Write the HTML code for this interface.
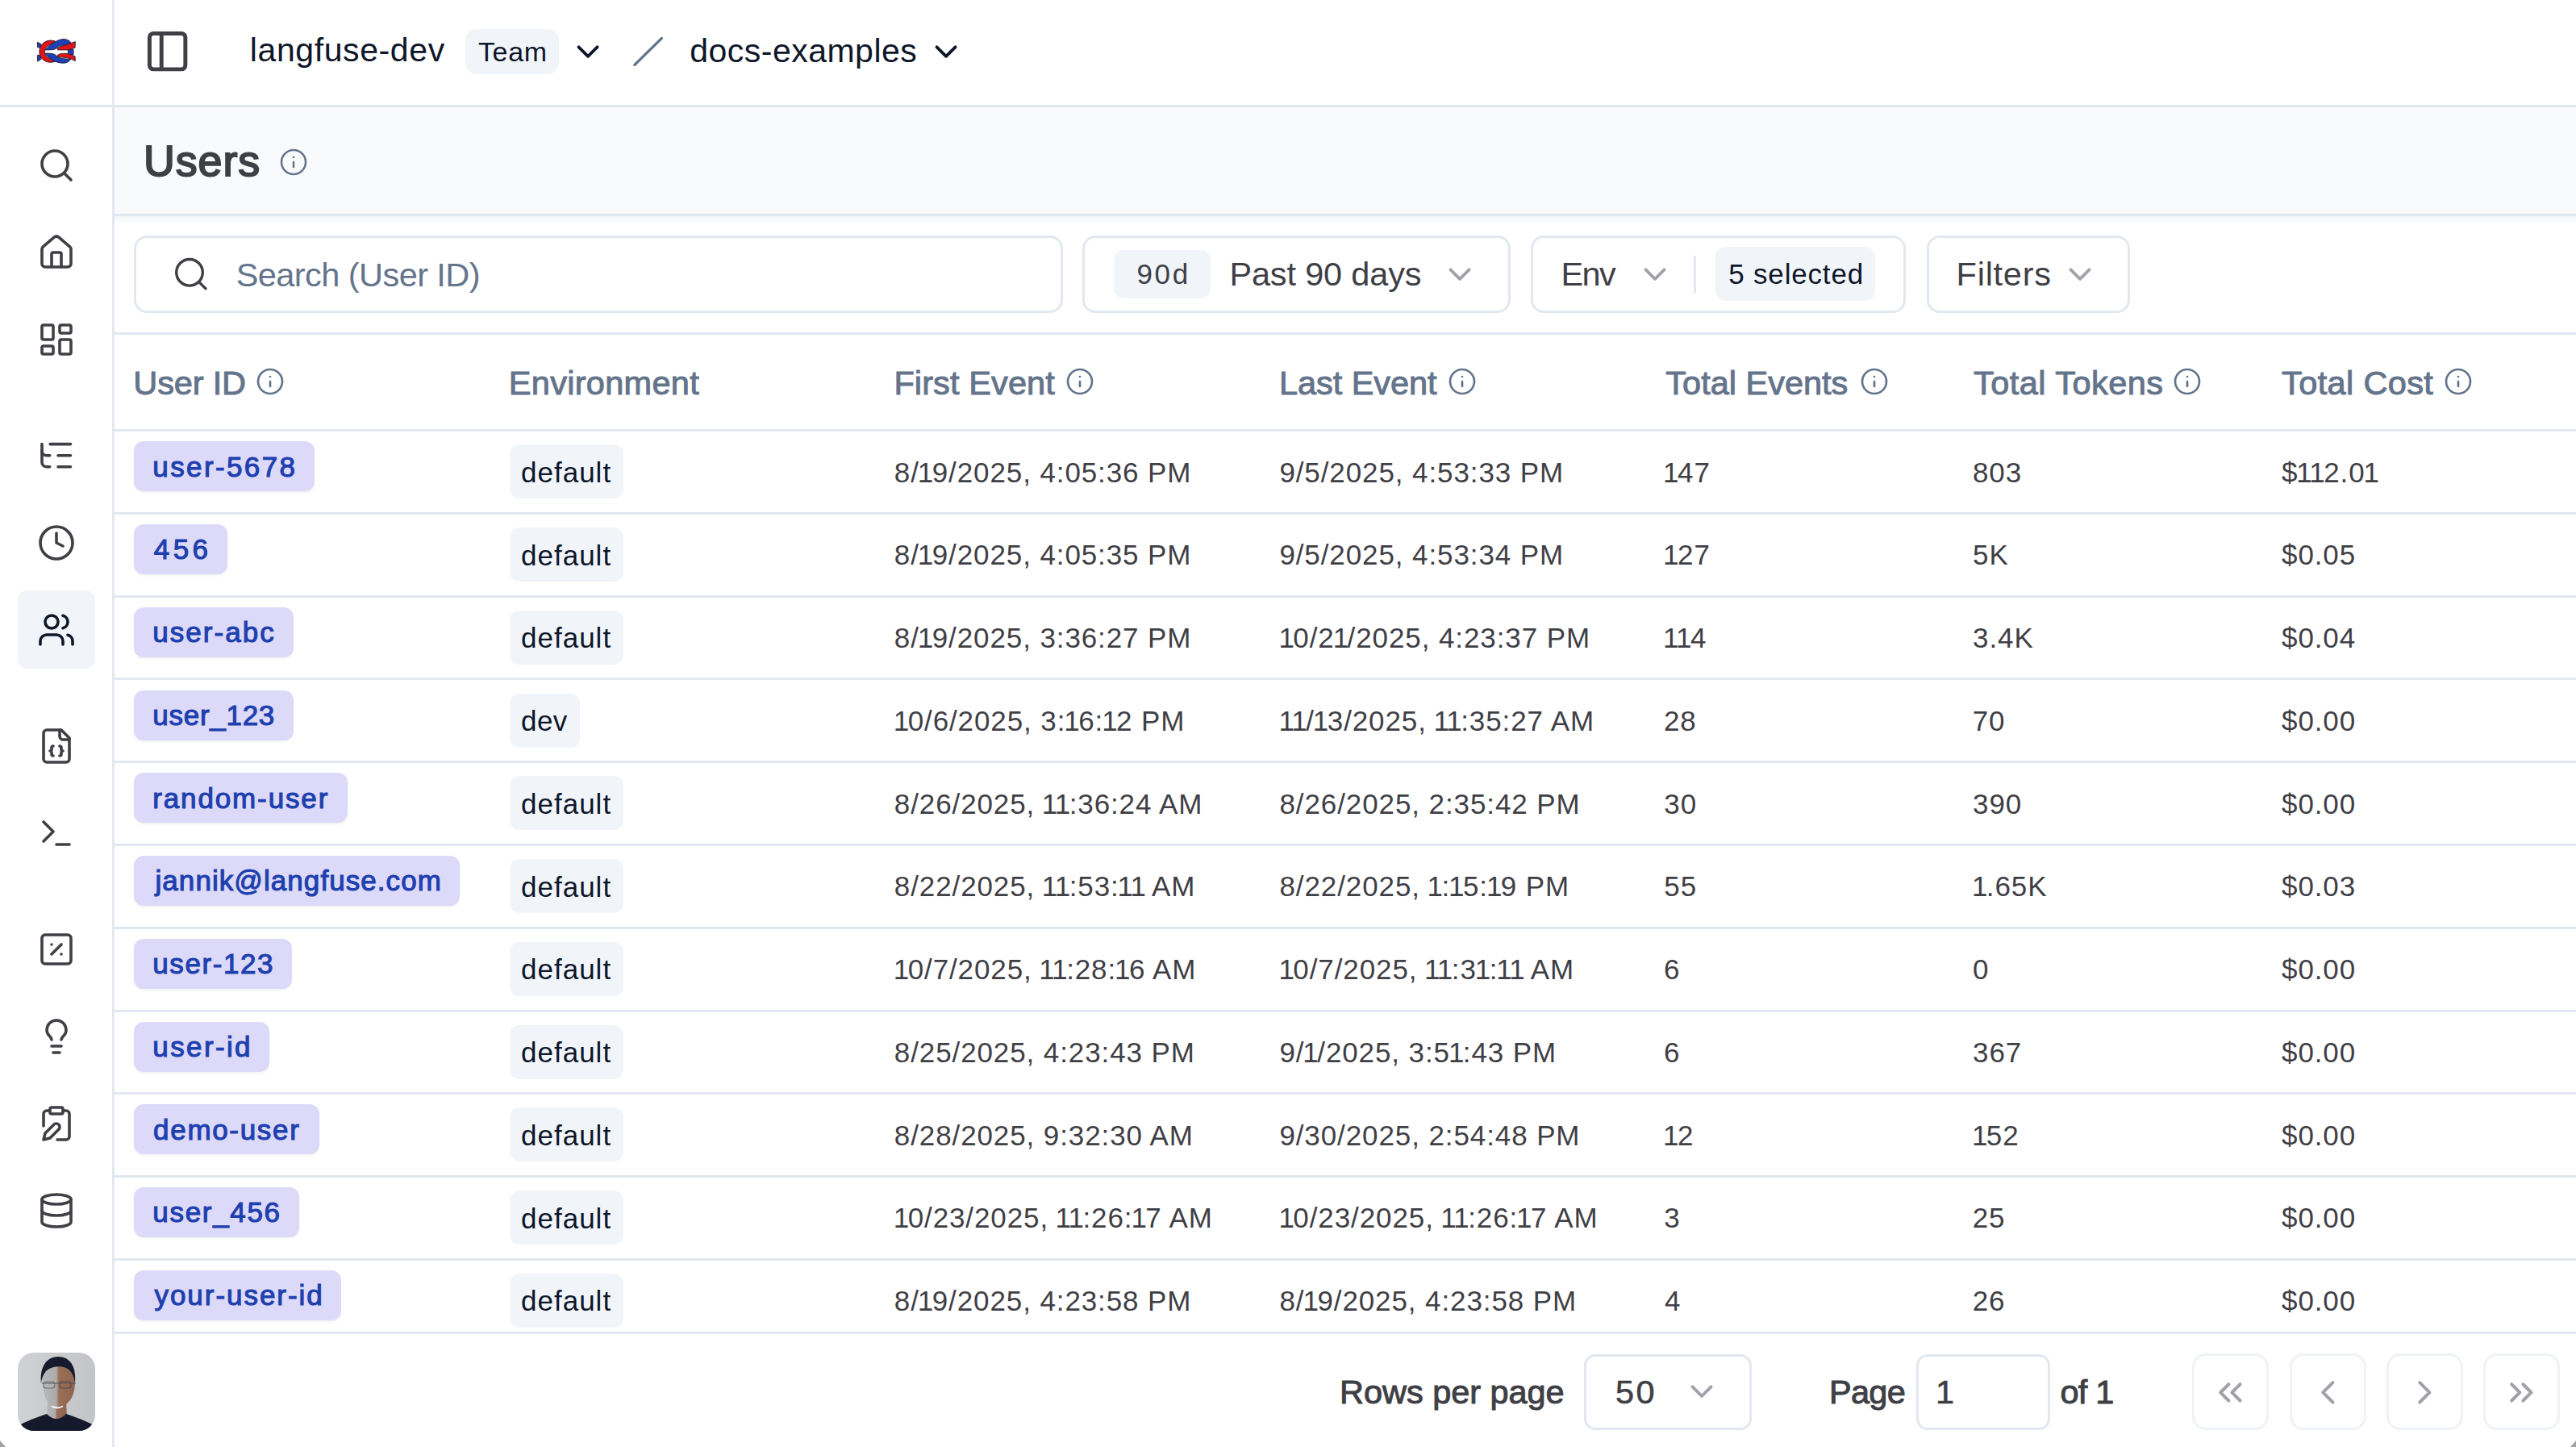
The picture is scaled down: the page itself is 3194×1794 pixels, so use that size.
<!DOCTYPE html>
<html><head><meta charset="utf-8"><style>
html,body{margin:0;padding:0;}
body{width:3194px;height:1794px;position:relative;overflow:hidden;background:#fff;font-family:"Liberation Sans",sans-serif;}
.t{position:absolute;white-space:pre;}
.b{position:absolute;}
.i{position:absolute;overflow:visible;}
@media (max-width:2400px){html{zoom:0.5;}}
</style></head><body>
<div class="b" style="left:0.00px;top:0.00px;width:3194.00px;height:130.00px;background:#fff"></div>
<div class="b" style="left:0.00px;top:130.00px;width:3194.00px;height:3.00px;background:#e2e8f0"></div>
<div class="b" style="left:139.00px;top:0.00px;width:3.00px;height:1794.00px;background:#e2e8f0"></div>
<div class="b" style="left:142.00px;top:133.00px;width:3052.00px;height:132.00px;background:#f8fafc"></div>
<div class="b" style="left:142.00px;top:265.00px;width:3052.00px;height:3.00px;background:#e2e8f0"></div>
<div class="b" style="left:142.00px;top:268.00px;width:3052.00px;height:10.00px;background:linear-gradient(#f3f5f8,#fff)"></div>
<div class="b" style="left:142.00px;top:412.00px;width:3052.00px;height:3.00px;background:#e2e8f0"></div>
<div class="b" style="left:142.00px;top:532.00px;width:3052.00px;height:3.00px;background:#e2e8f0"></div>
<div class="b" style="left:142.00px;top:635.00px;width:3052.00px;height:3.00px;background:#e2e8f0"></div>
<div class="b" style="left:142.00px;top:738.00px;width:3052.00px;height:3.00px;background:#e2e8f0"></div>
<div class="b" style="left:142.00px;top:840.00px;width:3052.00px;height:3.00px;background:#e2e8f0"></div>
<div class="b" style="left:142.00px;top:943.00px;width:3052.00px;height:3.00px;background:#e2e8f0"></div>
<div class="b" style="left:142.00px;top:1046.00px;width:3052.00px;height:3.00px;background:#e2e8f0"></div>
<div class="b" style="left:142.00px;top:1149.00px;width:3052.00px;height:3.00px;background:#e2e8f0"></div>
<div class="b" style="left:142.00px;top:1252.00px;width:3052.00px;height:3.00px;background:#e2e8f0"></div>
<div class="b" style="left:142.00px;top:1354.00px;width:3052.00px;height:3.00px;background:#e2e8f0"></div>
<div class="b" style="left:142.00px;top:1457.00px;width:3052.00px;height:3.00px;background:#e2e8f0"></div>
<div class="b" style="left:142.00px;top:1560.00px;width:3052.00px;height:3.00px;background:#e2e8f0"></div>
<div class="b" style="left:142.00px;top:1651.00px;width:3052.00px;height:3.00px;background:#e2e8f0"></div>
<svg class="i" style="left:40px;top:40px;width:60px;height:48px" viewBox="0 0 1809 1447">
<g stroke="#1f1f2a" stroke-width="26" stroke-linejoin="round">
<path fill="#1d3fb8" d="M195 370 L330 440 L300 580 L195 560 Z"/>
<path fill="#1d3fb8" d="M195 860 L300 850 L330 1010 L195 1090 Z"/>
<path fill="#1d3fb8" d="M1340 640 L1540 640 L1540 830 L1340 830 Z"/>
<path fill="#e0141a" d="M850 330 C560 230 270 420 265 720 C270 1030 560 1200 880 1090 L800 960 C600 1010 470 900 465 730 C470 560 600 470 830 400 Z"/>
<path fill="#1d3fb8" d="M480 660 C620 500 800 340 1100 260 C1300 240 1420 320 1460 420 L1300 500 C1150 470 1000 480 900 600 C820 660 700 660 480 660 Z"/>
<path fill="#e0141a" d="M930 600 C1050 500 1300 480 1450 410 L1610 350 L1600 580 L1350 660 L960 660 Z"/>
<path fill="#1d3fb8" d="M480 790 C700 780 820 790 900 880 C1000 980 1200 1000 1440 1000 C1380 1120 1250 1160 1100 1150 C820 1120 650 1000 480 790 Z"/>
<path fill="#e0141a" d="M930 870 C1000 790 1200 780 1350 800 L1600 900 L1610 1070 L1450 1000 C1300 940 1100 930 960 930 Z"/>
</g></svg>
<svg class="i" style="left:178.40px;top:34.20px;width:59.28px;height:59.28px;" viewBox="0 0 24 24" fill="none" stroke="#3f3f46" stroke-width="2.0" stroke-linecap="round" stroke-linejoin="round"><rect width="18" height="18" x="3" y="3" rx="2"/><path d="M9 3v18"/></svg>
<div class="t" style="left:309.85px;top:42.29px;font-size:41px;line-height:41px;color:#0f172a;letter-spacing:0.593px;">langfuse-dev</div>
<div class="b" style="left:577.00px;top:35.80px;width:116.00px;height:55.90px;background:#f1f5f9;border-radius:14px"></div>
<div class="t" style="left:592.95px;top:47.11px;font-size:34px;line-height:34px;color:#0f172a;letter-spacing:0.683px;">Team</div>
<svg class="i" style="left:705.76px;top:40.81px;width:46.08px;height:46.08px;" viewBox="0 0 24 24" fill="none" stroke="#0f172a" stroke-width="2" stroke-linecap="round" stroke-linejoin="round"><path d="m6 9 6 6 6-6"/></svg>
<svg class="i" style="left:770px;top:30px;width:70px;height:70px" viewBox="770 30 70 70"><line x1="786.8" y1="80.5" x2="820.5" y2="47.4" stroke="#64748b" stroke-width="3.2" stroke-linecap="round"/></svg>
<div class="t" style="left:855.25px;top:42.89px;font-size:41px;line-height:41px;color:#0f172a;letter-spacing:0.483px;">docs-examples</div>
<svg class="i" style="left:1149.96px;top:40.86px;width:46.08px;height:46.08px;" viewBox="0 0 24 24" fill="none" stroke="#0f172a" stroke-width="2" stroke-linecap="round" stroke-linejoin="round"><path d="m6 9 6 6 6-6"/></svg>
<div class="b" style="left:21.80px;top:732.40px;width:96.40px;height:96.40px;background:#f1f5f9;border-radius:12px"></div>
<svg class="i" style="left:46.00px;top:181.00px;width:48.00px;height:48.00px;" viewBox="0 0 24 24" fill="none" stroke="#3f3f46" stroke-width="1.8" stroke-linecap="round" stroke-linejoin="round"><circle cx="11" cy="11" r="8"/><path d="m21 21-4.3-4.3"/></svg>
<svg class="i" style="left:46.00px;top:288.50px;width:48.00px;height:48.00px;" viewBox="0 0 24 24" fill="none" stroke="#3f3f46" stroke-width="1.8" stroke-linecap="round" stroke-linejoin="round"><path d="M15 21v-8a1 1 0 0 0-1-1h-4a1 1 0 0 0-1 1v8"/><path d="M3 10a2 2 0 0 1 .709-1.528l7-5.999a2 2 0 0 1 2.582 0l7 5.999A2 2 0 0 1 21 10v9a2 2 0 0 1-2 2H5a2 2 0 0 1-2-2z"/></svg>
<svg class="i" style="left:46.00px;top:396.50px;width:48.00px;height:48.00px;" viewBox="0 0 24 24" fill="none" stroke="#3f3f46" stroke-width="1.8" stroke-linecap="round" stroke-linejoin="round"><rect width="7" height="9" x="3" y="3" rx="1"/><rect width="7" height="5" x="14" y="3" rx="1"/><rect width="7" height="9" x="14" y="12" rx="1"/><rect width="7" height="5" x="3" y="16" rx="1"/></svg>
<svg class="i" style="left:46.00px;top:649.00px;width:48.00px;height:48.00px;" viewBox="0 0 24 24" fill="none" stroke="#3f3f46" stroke-width="1.8" stroke-linecap="round" stroke-linejoin="round"><circle cx="12" cy="12" r="10"/><polyline points="12 6 12 12 16 14"/></svg>
<svg class="i" style="left:46.00px;top:757.00px;width:48.00px;height:48.00px;" viewBox="0 0 24 24" fill="none" stroke="#0f172a" stroke-width="1.8" stroke-linecap="round" stroke-linejoin="round"><path d="M16 21v-2a4 4 0 0 0-4-4H6a4 4 0 0 0-4 4v2"/><circle cx="9" cy="7" r="4"/><path d="M22 21v-2a4 4 0 0 0-3-3.87"/><path d="M16 3.13a4 4 0 0 1 0 7.75"/></svg>
<svg class="i" style="left:46.00px;top:901.00px;width:48.00px;height:48.00px;" viewBox="0 0 24 24" fill="none" stroke="#3f3f46" stroke-width="1.8" stroke-linecap="round" stroke-linejoin="round"><path d="M15 2H6a2 2 0 0 0-2 2v16a2 2 0 0 0 2 2h12a2 2 0 0 0 2-2V7Z"/><path d="M14 2v4a2 2 0 0 0 2 2h4"/><path d="M10 12a1 1 0 0 0-1 1v1a1 1 0 0 1-1 1 1 1 0 0 1 1 1v1a1 1 0 0 0 1 1"/><path d="M14 18a1 1 0 0 0 1-1v-1a1 1 0 0 1 1-1 1 1 0 0 1-1-1v-1a1 1 0 0 0-1-1"/></svg>
<svg class="i" style="left:46.00px;top:1009.00px;width:48.00px;height:48.00px;" viewBox="0 0 24 24" fill="none" stroke="#3f3f46" stroke-width="1.8" stroke-linecap="round" stroke-linejoin="round"><polyline points="4 17 10 11 4 5"/><line x1="12" x2="20" y1="19" y2="19"/></svg>
<svg class="i" style="left:46.00px;top:1153.00px;width:48.00px;height:48.00px;" viewBox="0 0 24 24" fill="none" stroke="#3f3f46" stroke-width="1.8" stroke-linecap="round" stroke-linejoin="round"><rect width="18" height="18" x="3" y="3" rx="2"/><path d="m15 9-6 6"/><path d="M9 9h.01"/><path d="M15 15h.01"/></svg>
<svg class="i" style="left:46.00px;top:1261.00px;width:48.00px;height:48.00px;" viewBox="0 0 24 24" fill="none" stroke="#3f3f46" stroke-width="1.8" stroke-linecap="round" stroke-linejoin="round"><path d="M15 14c.2-1 .7-1.7 1.5-2.5 1-.9 1.5-2.2 1.5-3.5A6 6 0 0 0 6 8c0 1 .2 2.2 1.5 3.5.7.7 1.3 1.5 1.5 2.5"/><path d="M9 18h6"/><path d="M10 22h4"/></svg>
<svg class="i" style="left:46.00px;top:1369.00px;width:48.00px;height:48.00px;" viewBox="0 0 24 24" fill="none" stroke="#3f3f46" stroke-width="1.8" stroke-linecap="round" stroke-linejoin="round"><rect width="8" height="4" x="8" y="2" rx="1"/><path d="M10.4 12.6a2 2 0 0 1 3 3L8 21l-4 1 1-4Z"/><path d="M16 4h2a2 2 0 0 1 2 2v14a2 2 0 0 1-2 2h-5.5"/><path d="M4 13.5V6a2 2 0 0 1 2-2h2"/></svg>
<svg class="i" style="left:46.00px;top:1477.00px;width:48.00px;height:48.00px;" viewBox="0 0 24 24" fill="none" stroke="#3f3f46" stroke-width="1.8" stroke-linecap="round" stroke-linejoin="round"><ellipse cx="12" cy="5" rx="9" ry="3"/><path d="M3 5V19A9 3 0 0 0 21 19V5"/><path d="M3 12A9 3 0 0 0 21 12"/></svg>
<svg class="i" style="left:40px;top:540px;width:60px;height:50px" viewBox="40 540 60 50" fill="none" stroke="#3f3f46" stroke-width="3.6" stroke-linecap="round" stroke-linejoin="round"><path d="M62.2 550.6H87.5"/><path d="M72 564.7H87.5"/><path d="M72 578.8H87.5"/><path d="M52 550.6V573a5.8 5.8 0 0 0 5.8 5.8H61.7"/><path d="M52 558.9a5.8 5.8 0 0 0 5.8 5.8H61.7"/></svg>
<svg class="i" style="left:22px;top:1677px;width:96px;height:97px" viewBox="0 0 96 97">
<defs><clipPath id="av"><rect width="96" height="97" rx="20"/></clipPath>
<linearGradient id="avbg" x1="0" x2="1"><stop offset="0" stop-color="#d0d1d4"/><stop offset="1" stop-color="#c3c4c7"/></linearGradient>
<linearGradient id="face" x1="0" x2="1"><stop offset="0" stop-color="#b7b8bc"/><stop offset="0.42" stop-color="#aeaaa9"/><stop offset="0.5" stop-color="#9a6e58"/><stop offset="1" stop-color="#8f644f"/></linearGradient></defs>
<g clip-path="url(#av)">
<rect width="96" height="97" fill="url(#avbg)"/>
<path d="M37 60 L60 60 L61 80 C52 86 44 86 36 80Z" fill="url(#face)"/>
<path d="M31 36 C30 20 38 14 50 14 C62 14 71 20 71 36 C71 48 68 58 60 64 C54 69 47 69 42 66 C34 60 31 48 31 36 Z" fill="url(#face)"/>
<path d="M0 97 L0 91 C10 85 24 80 36 76 C44 84 52 84 60 76 C72 80 86 85 96 91 L96 97Z" fill="#141a2b"/>
<path d="M29 38 C27 16 37 5 50 5 C64 5 73 16 71 38 C70 28 66 22 60 19 C53 16 42 17 36 22 C32 26 30 31 29 38 Z" fill="#151b2c"/>
<path d="M30 38 H72" stroke="#55555c" stroke-width="1.2"/>
<rect x="32" y="36" width="14" height="8" rx="3" fill="none" stroke="#6a6a70" stroke-width="1.1"/>
<rect x="52" y="36" width="14" height="8" rx="3" fill="none" stroke="#4a4a52" stroke-width="1.1"/>
<path d="M42 66.5 C47 69 52 69 56 66.5" stroke="#f2f2f2" stroke-width="2" fill="none"/>
</g></svg>
<svg class="i" style="left:0;top:1786px;width:8px;height:8px" viewBox="0 0 8 8"><path d="M0 0 L7 8 L0 8Z" fill="#a0a0a6"/></svg>
<svg class="i" style="left:3186px;top:1786px;width:8px;height:8px" viewBox="0 0 8 8"><path d="M8 0 L1 8 L8 8Z" fill="#a0a0a6"/></svg>
<div class="t" style="left:177.97px;top:173.45px;font-size:53.8px;line-height:53.8px;color:#3f3f46;letter-spacing:0.913px;-webkit-text-stroke:2px #3f3f46;">Users</div>
<svg class="i" style="left:346.00px;top:183.00px;width:36.00px;height:36.00px;" viewBox="0 0 24 24" fill="none" stroke="#64748b" stroke-width="1.7" stroke-linecap="round" stroke-linejoin="round"><circle cx="12" cy="12" r="10"/><path d="M12 16v-4"/><path d="M12 8h.01"/></svg>
<div class="b" style="left:166.00px;top:292.00px;width:1152.00px;height:95.50px;border:3px solid #e2e8f0;border-radius:16px;box-sizing:border-box;background:#fff"></div>
<svg class="i" style="left:200px;top:300px;width:70px;height:70px" viewBox="200 300 70 70" fill="none" stroke="#3f3f46" stroke-width="3.4" stroke-linecap="round"><circle cx="235" cy="337.8" r="16.3"/><path d="M255 357.8 L246.8 349.6"/></svg>
<div class="t" style="left:292.73px;top:320.26px;font-size:41.5px;line-height:41.5px;color:#64748b;letter-spacing:-0.565px;">Search (User ID)</div>
<div class="b" style="left:1342.00px;top:292.00px;width:530.50px;height:95.50px;border:3px solid #e2e8f0;border-radius:16px;box-sizing:border-box;background:#fff"></div>
<div class="b" style="left:1381.00px;top:309.80px;width:119.80px;height:59.90px;background:#f1f5f9;border-radius:12px"></div>
<div class="t" style="left:1409.38px;top:322.07px;font-size:35px;line-height:35px;color:#3f3f46;letter-spacing:2.750px;">90d</div>
<div class="t" style="left:1524.42px;top:319.36px;font-size:41.5px;line-height:41.5px;color:#3f3f46;letter-spacing:-0.164px;">Past 90 days</div>
<svg class="i" style="left:1786.96px;top:316.96px;width:46.08px;height:46.08px;" viewBox="0 0 24 24" fill="none" stroke="#a1a1aa" stroke-width="2" stroke-linecap="round" stroke-linejoin="round"><path d="m6 9 6 6 6-6"/></svg>
<div class="b" style="left:1898.00px;top:292.00px;width:465.00px;height:95.50px;border:3px solid #e2e8f0;border-radius:16px;box-sizing:border-box;background:#fff"></div>
<div class="t" style="left:1935.62px;top:318.86px;font-size:41.5px;line-height:41.5px;color:#3f3f46;letter-spacing:-1.700px;">Env</div>
<svg class="i" style="left:2028.86px;top:316.86px;width:46.08px;height:46.08px;" viewBox="0 0 24 24" fill="none" stroke="#a1a1aa" stroke-width="2" stroke-linecap="round" stroke-linejoin="round"><path d="m6 9 6 6 6-6"/></svg>
<div class="b" style="left:2100.00px;top:316.60px;width:3.00px;height:46.40px;background:#e2e8f0"></div>
<div class="b" style="left:2127.00px;top:306.40px;width:197.70px;height:66.80px;background:#f1f5f9;border-radius:12px"></div>
<div class="t" style="left:2143.22px;top:322.37px;font-size:35px;line-height:35px;color:#0f172a;letter-spacing:0.822px;">5 selected</div>
<div class="b" style="left:2388.70px;top:292.00px;width:252.30px;height:95.50px;border:3px solid #e2e8f0;border-radius:16px;box-sizing:border-box;background:#fff"></div>
<div class="t" style="left:2425.62px;top:318.86px;font-size:41.5px;line-height:41.5px;color:#3f3f46;letter-spacing:0.729px;">Filters</div>
<svg class="i" style="left:2555.76px;top:316.96px;width:46.08px;height:46.08px;" viewBox="0 0 24 24" fill="none" stroke="#a1a1aa" stroke-width="2" stroke-linecap="round" stroke-linejoin="round"><path d="m6 9 6 6 6-6"/></svg>
<div class="t" style="left:165.35px;top:453.76px;font-size:41.5px;line-height:41.5px;color:#64748b;letter-spacing:-0.162px;-webkit-text-stroke:1.0px #64748b;">User ID</div>
<svg class="i" style="left:317.10px;top:454.90px;width:36.00px;height:36.00px;" viewBox="0 0 24 24" fill="none" stroke="#64748b" stroke-width="1.8" stroke-linecap="round" stroke-linejoin="round"><circle cx="12" cy="12" r="10"/><path d="M12 16v-4"/><path d="M12 8h.01"/></svg>
<div class="t" style="left:630.83px;top:453.76px;font-size:41.5px;line-height:41.5px;color:#64748b;letter-spacing:0.293px;-webkit-text-stroke:1.0px #64748b;">Environment</div>
<div class="t" style="left:1108.42px;top:453.76px;font-size:41.5px;line-height:41.5px;color:#64748b;letter-spacing:0.107px;-webkit-text-stroke:1.0px #64748b;">First Event</div>
<svg class="i" style="left:1320.50px;top:454.90px;width:36.00px;height:36.00px;" viewBox="0 0 24 24" fill="none" stroke="#64748b" stroke-width="1.8" stroke-linecap="round" stroke-linejoin="round"><circle cx="12" cy="12" r="10"/><path d="M12 16v-4"/><path d="M12 8h.01"/></svg>
<div class="t" style="left:1586.12px;top:453.76px;font-size:41.5px;line-height:41.5px;color:#64748b;letter-spacing:-0.086px;-webkit-text-stroke:1.0px #64748b;">Last Event</div>
<svg class="i" style="left:1795.10px;top:454.90px;width:36.00px;height:36.00px;" viewBox="0 0 24 24" fill="none" stroke="#64748b" stroke-width="1.8" stroke-linecap="round" stroke-linejoin="round"><circle cx="12" cy="12" r="10"/><path d="M12 16v-4"/><path d="M12 8h.01"/></svg>
<div class="t" style="left:2065.32px;top:453.76px;font-size:41.5px;line-height:41.5px;color:#64748b;letter-spacing:-0.002px;-webkit-text-stroke:1.0px #64748b;">Total Events</div>
<svg class="i" style="left:2305.50px;top:454.90px;width:36.00px;height:36.00px;" viewBox="0 0 24 24" fill="none" stroke="#64748b" stroke-width="1.8" stroke-linecap="round" stroke-linejoin="round"><circle cx="12" cy="12" r="10"/><path d="M12 16v-4"/><path d="M12 8h.01"/></svg>
<div class="t" style="left:2446.93px;top:453.76px;font-size:41.5px;line-height:41.5px;color:#64748b;letter-spacing:0.473px;-webkit-text-stroke:1.0px #64748b;">Total Tokens</div>
<svg class="i" style="left:2693.80px;top:454.90px;width:36.00px;height:36.00px;" viewBox="0 0 24 24" fill="none" stroke="#64748b" stroke-width="1.8" stroke-linecap="round" stroke-linejoin="round"><circle cx="12" cy="12" r="10"/><path d="M12 16v-4"/><path d="M12 8h.01"/></svg>
<div class="t" style="left:2829.12px;top:453.76px;font-size:41.5px;line-height:41.5px;color:#64748b;letter-spacing:0.347px;-webkit-text-stroke:1.0px #64748b;">Total Cost</div>
<svg class="i" style="left:3029.80px;top:454.90px;width:36.00px;height:36.00px;" viewBox="0 0 24 24" fill="none" stroke="#64748b" stroke-width="1.8" stroke-linecap="round" stroke-linejoin="round"><circle cx="12" cy="12" r="10"/><path d="M12 16v-4"/><path d="M12 8h.01"/></svg>
<div class="b" style="left:166.00px;top:547.25px;width:223.70px;height:62.00px;background:#dcdaf8;border-radius:12px;box-shadow:0 2px 3px rgba(0,0,0,0.05)"></div>
<div class="t" style="left:189.35px;top:560.62px;font-size:35px;line-height:35px;color:#1e40af;letter-spacing:2.378px;-webkit-text-stroke:1.1px #1e40af;">user-5678</div>
<div class="b" style="left:632.00px;top:551.25px;width:140.80px;height:67.00px;background:#f1f5f9;border-radius:12px"></div>
<div class="t" style="left:646.10px;top:567.92px;font-size:35px;line-height:35px;color:#0f172a;letter-spacing:0.987px;">default</div>
<div class="t" style="left:1108.80px;top:567.62px;font-size:35px;line-height:35px;color:#3f3f46;letter-spacing:0.900px;">8/<span style="margin-left:-2.1px;margin-right:-2.4px">1</span>9/2025, 4:05:36 PM</div>
<div class="t" style="left:1586.38px;top:567.62px;font-size:35px;line-height:35px;color:#3f3f46;letter-spacing:0.900px;">9/5/2025, 4:53:33 PM</div>
<div class="t" style="left:2062.07px;top:567.62px;font-size:35px;line-height:35px;color:#3f3f46;letter-spacing:0.900px;"><span style="margin-left:0px;margin-right:-2.4px">1</span>47</div>
<div class="t" style="left:2446.00px;top:567.62px;font-size:35px;line-height:35px;color:#3f3f46;letter-spacing:0.900px;">803</div>
<div class="t" style="left:2829.03px;top:567.62px;font-size:35px;line-height:35px;color:#3f3f46;letter-spacing:0.900px;">$<span style="margin-left:-2.1px;margin-right:-2.4px">1</span><span style="margin-left:-2.1px;margin-right:-2.4px">1</span>2.0<span style="margin-left:-2.1px;margin-right:-2.4px">1</span></div>
<div class="b" style="left:166.00px;top:650.00px;width:115.50px;height:62.00px;background:#dcdaf8;border-radius:12px;box-shadow:0 2px 3px rgba(0,0,0,0.05)"></div>
<div class="t" style="left:190.85px;top:663.37px;font-size:35px;line-height:35px;color:#1e40af;letter-spacing:4.350px;-webkit-text-stroke:1.1px #1e40af;">456</div>
<div class="b" style="left:632.00px;top:654.00px;width:140.80px;height:67.00px;background:#f1f5f9;border-radius:12px"></div>
<div class="t" style="left:646.10px;top:670.67px;font-size:35px;line-height:35px;color:#0f172a;letter-spacing:0.987px;">default</div>
<div class="t" style="left:1108.80px;top:670.37px;font-size:35px;line-height:35px;color:#3f3f46;letter-spacing:0.900px;">8/<span style="margin-left:-2.1px;margin-right:-2.4px">1</span>9/2025, 4:05:35 PM</div>
<div class="t" style="left:1586.38px;top:670.37px;font-size:35px;line-height:35px;color:#3f3f46;letter-spacing:0.900px;">9/5/2025, 4:53:34 PM</div>
<div class="t" style="left:2062.07px;top:670.37px;font-size:35px;line-height:35px;color:#3f3f46;letter-spacing:0.900px;"><span style="margin-left:0px;margin-right:-2.4px">1</span>27</div>
<div class="t" style="left:2446.12px;top:670.37px;font-size:35px;line-height:35px;color:#3f3f46;letter-spacing:0.900px;">5K</div>
<div class="t" style="left:2829.03px;top:670.37px;font-size:35px;line-height:35px;color:#3f3f46;letter-spacing:0.900px;">$0.05</div>
<div class="b" style="left:166.00px;top:752.75px;width:197.90px;height:62.00px;background:#dcdaf8;border-radius:12px;box-shadow:0 2px 3px rgba(0,0,0,0.05)"></div>
<div class="t" style="left:189.35px;top:766.12px;font-size:35px;line-height:35px;color:#1e40af;letter-spacing:2.032px;-webkit-text-stroke:1.1px #1e40af;">user-abc</div>
<div class="b" style="left:632.00px;top:756.75px;width:140.80px;height:67.00px;background:#f1f5f9;border-radius:12px"></div>
<div class="t" style="left:646.10px;top:773.42px;font-size:35px;line-height:35px;color:#0f172a;letter-spacing:0.987px;">default</div>
<div class="t" style="left:1108.80px;top:773.12px;font-size:35px;line-height:35px;color:#3f3f46;letter-spacing:0.900px;">8/<span style="margin-left:-2.1px;margin-right:-2.4px">1</span>9/2025, 3:36:27 PM</div>
<div class="t" style="left:1585.38px;top:773.12px;font-size:35px;line-height:35px;color:#3f3f46;letter-spacing:0.900px;"><span style="margin-left:0px;margin-right:-2.4px">1</span>0/2<span style="margin-left:-2.1px;margin-right:-2.4px">1</span>/2025, 4:23:37 PM</div>
<div class="t" style="left:2062.07px;top:773.12px;font-size:35px;line-height:35px;color:#3f3f46;letter-spacing:0.900px;"><span style="margin-left:0px;margin-right:-2.4px">1</span><span style="margin-left:-2.1px;margin-right:-2.4px">1</span>4</div>
<div class="t" style="left:2446.12px;top:773.12px;font-size:35px;line-height:35px;color:#3f3f46;letter-spacing:0.900px;">3.4K</div>
<div class="t" style="left:2829.03px;top:773.12px;font-size:35px;line-height:35px;color:#3f3f46;letter-spacing:0.900px;">$0.04</div>
<div class="b" style="left:166.00px;top:855.50px;width:197.90px;height:62.00px;background:#dcdaf8;border-radius:12px;box-shadow:0 2px 3px rgba(0,0,0,0.05)"></div>
<div class="t" style="left:189.35px;top:868.87px;font-size:35px;line-height:35px;color:#1e40af;letter-spacing:0.711px;-webkit-text-stroke:1.1px #1e40af;">user_123</div>
<div class="b" style="left:632.00px;top:859.50px;width:87.00px;height:67.00px;background:#f1f5f9;border-radius:12px"></div>
<div class="t" style="left:646.10px;top:876.17px;font-size:35px;line-height:35px;color:#0f172a;letter-spacing:0.375px;">dev</div>
<div class="t" style="left:1107.67px;top:875.87px;font-size:35px;line-height:35px;color:#3f3f46;letter-spacing:0.900px;"><span style="margin-left:0px;margin-right:-2.4px">1</span>0/6/2025, 3:<span style="margin-left:-2.1px;margin-right:-2.4px">1</span>6:<span style="margin-left:-2.1px;margin-right:-2.4px">1</span>2 PM</div>
<div class="t" style="left:1585.38px;top:875.87px;font-size:35px;line-height:35px;color:#3f3f46;letter-spacing:0.900px;"><span style="margin-left:0px;margin-right:-2.4px">1</span><span style="margin-left:-2.1px;margin-right:-2.4px">1</span>/<span style="margin-left:-2.1px;margin-right:-2.4px">1</span>3/2025, <span style="margin-left:-2.1px;margin-right:-2.4px">1</span><span style="margin-left:-2.1px;margin-right:-2.4px">1</span>:35:27 AM</div>
<div class="t" style="left:2062.95px;top:875.87px;font-size:35px;line-height:35px;color:#3f3f46;letter-spacing:0.900px;">28</div>
<div class="t" style="left:2445.75px;top:875.87px;font-size:35px;line-height:35px;color:#3f3f46;letter-spacing:0.900px;">70</div>
<div class="t" style="left:2829.03px;top:875.87px;font-size:35px;line-height:35px;color:#3f3f46;letter-spacing:0.900px;">$0.00</div>
<div class="b" style="left:166.00px;top:958.25px;width:265.00px;height:62.00px;background:#dcdaf8;border-radius:12px;box-shadow:0 2px 3px rgba(0,0,0,0.05)"></div>
<div class="t" style="left:189.22px;top:971.62px;font-size:35px;line-height:35px;color:#1e40af;letter-spacing:1.870px;-webkit-text-stroke:1.1px #1e40af;">random-user</div>
<div class="b" style="left:632.00px;top:962.25px;width:140.80px;height:67.00px;background:#f1f5f9;border-radius:12px"></div>
<div class="t" style="left:646.10px;top:978.92px;font-size:35px;line-height:35px;color:#0f172a;letter-spacing:0.987px;">default</div>
<div class="t" style="left:1108.80px;top:978.62px;font-size:35px;line-height:35px;color:#3f3f46;letter-spacing:0.900px;">8/26/2025, <span style="margin-left:-2.1px;margin-right:-2.4px">1</span><span style="margin-left:-2.1px;margin-right:-2.4px">1</span>:36:24 AM</div>
<div class="t" style="left:1586.50px;top:978.62px;font-size:35px;line-height:35px;color:#3f3f46;letter-spacing:0.900px;">8/26/2025, 2:35:42 PM</div>
<div class="t" style="left:2063.32px;top:978.62px;font-size:35px;line-height:35px;color:#3f3f46;letter-spacing:0.900px;">30</div>
<div class="t" style="left:2446.12px;top:978.62px;font-size:35px;line-height:35px;color:#3f3f46;letter-spacing:0.900px;">390</div>
<div class="t" style="left:2829.03px;top:978.62px;font-size:35px;line-height:35px;color:#3f3f46;letter-spacing:0.900px;">$0.00</div>
<div class="b" style="left:166.00px;top:1061.00px;width:403.80px;height:62.00px;background:#dcdaf8;border-radius:12px;box-shadow:0 2px 3px rgba(0,0,0,0.05)"></div>
<div class="t" style="left:192.47px;top:1074.37px;font-size:35px;line-height:35px;color:#1e40af;letter-spacing:1.069px;-webkit-text-stroke:1.1px #1e40af;">jannik@langfuse.com</div>
<div class="b" style="left:632.00px;top:1065.00px;width:140.80px;height:67.00px;background:#f1f5f9;border-radius:12px"></div>
<div class="t" style="left:646.10px;top:1081.67px;font-size:35px;line-height:35px;color:#0f172a;letter-spacing:0.987px;">default</div>
<div class="t" style="left:1108.80px;top:1081.37px;font-size:35px;line-height:35px;color:#3f3f46;letter-spacing:0.900px;">8/22/2025, <span style="margin-left:-2.1px;margin-right:-2.4px">1</span><span style="margin-left:-2.1px;margin-right:-2.4px">1</span>:53:<span style="margin-left:-2.1px;margin-right:-2.4px">1</span><span style="margin-left:-2.1px;margin-right:-2.4px">1</span> AM</div>
<div class="t" style="left:1586.50px;top:1081.37px;font-size:35px;line-height:35px;color:#3f3f46;letter-spacing:0.900px;">8/22/2025, <span style="margin-left:-2.1px;margin-right:-2.4px">1</span>:<span style="margin-left:-2.1px;margin-right:-2.4px">1</span>5:<span style="margin-left:-2.1px;margin-right:-2.4px">1</span>9 PM</div>
<div class="t" style="left:2063.32px;top:1081.37px;font-size:35px;line-height:35px;color:#3f3f46;letter-spacing:0.900px;">55</div>
<div class="t" style="left:2444.88px;top:1081.37px;font-size:35px;line-height:35px;color:#3f3f46;letter-spacing:0.900px;"><span style="margin-left:0px;margin-right:-2.4px">1</span>.65K</div>
<div class="t" style="left:2829.03px;top:1081.37px;font-size:35px;line-height:35px;color:#3f3f46;letter-spacing:0.900px;">$0.03</div>
<div class="b" style="left:166.00px;top:1163.75px;width:196.00px;height:62.00px;background:#dcdaf8;border-radius:12px;box-shadow:0 2px 3px rgba(0,0,0,0.05)"></div>
<div class="t" style="left:189.35px;top:1177.12px;font-size:35px;line-height:35px;color:#1e40af;letter-spacing:1.564px;-webkit-text-stroke:1.1px #1e40af;">user-123</div>
<div class="b" style="left:632.00px;top:1167.75px;width:140.80px;height:67.00px;background:#f1f5f9;border-radius:12px"></div>
<div class="t" style="left:646.10px;top:1184.42px;font-size:35px;line-height:35px;color:#0f172a;letter-spacing:0.987px;">default</div>
<div class="t" style="left:1107.67px;top:1184.12px;font-size:35px;line-height:35px;color:#3f3f46;letter-spacing:0.900px;"><span style="margin-left:0px;margin-right:-2.4px">1</span>0/7/2025, <span style="margin-left:-2.1px;margin-right:-2.4px">1</span><span style="margin-left:-2.1px;margin-right:-2.4px">1</span>:28:<span style="margin-left:-2.1px;margin-right:-2.4px">1</span>6 AM</div>
<div class="t" style="left:1585.38px;top:1184.12px;font-size:35px;line-height:35px;color:#3f3f46;letter-spacing:0.900px;"><span style="margin-left:0px;margin-right:-2.4px">1</span>0/7/2025, <span style="margin-left:-2.1px;margin-right:-2.4px">1</span><span style="margin-left:-2.1px;margin-right:-2.4px">1</span>:3<span style="margin-left:-2.1px;margin-right:-2.4px">1</span>:<span style="margin-left:-2.1px;margin-right:-2.4px">1</span><span style="margin-left:-2.1px;margin-right:-2.4px">1</span> AM</div>
<div class="t" style="left:2062.95px;top:1184.12px;font-size:35px;line-height:35px;color:#3f3f46;letter-spacing:0.900px;">6</div>
<div class="t" style="left:2446.12px;top:1184.12px;font-size:35px;line-height:35px;color:#3f3f46;letter-spacing:0.900px;">0</div>
<div class="t" style="left:2829.03px;top:1184.12px;font-size:35px;line-height:35px;color:#3f3f46;letter-spacing:0.900px;">$0.00</div>
<div class="b" style="left:166.00px;top:1266.50px;width:167.50px;height:62.00px;background:#dcdaf8;border-radius:12px;box-shadow:0 2px 3px rgba(0,0,0,0.05)"></div>
<div class="t" style="left:189.35px;top:1279.87px;font-size:35px;line-height:35px;color:#1e40af;letter-spacing:2.367px;-webkit-text-stroke:1.1px #1e40af;">user-id</div>
<div class="b" style="left:632.00px;top:1270.50px;width:140.80px;height:67.00px;background:#f1f5f9;border-radius:12px"></div>
<div class="t" style="left:646.10px;top:1287.17px;font-size:35px;line-height:35px;color:#0f172a;letter-spacing:0.987px;">default</div>
<div class="t" style="left:1108.80px;top:1286.87px;font-size:35px;line-height:35px;color:#3f3f46;letter-spacing:0.900px;">8/25/2025, 4:23:43 PM</div>
<div class="t" style="left:1586.38px;top:1286.87px;font-size:35px;line-height:35px;color:#3f3f46;letter-spacing:0.900px;">9/<span style="margin-left:-2.1px;margin-right:-2.4px">1</span>/2025, 3:5<span style="margin-left:-2.1px;margin-right:-2.4px">1</span>:43 PM</div>
<div class="t" style="left:2062.95px;top:1286.87px;font-size:35px;line-height:35px;color:#3f3f46;letter-spacing:0.900px;">6</div>
<div class="t" style="left:2446.12px;top:1286.87px;font-size:35px;line-height:35px;color:#3f3f46;letter-spacing:0.900px;">367</div>
<div class="t" style="left:2829.03px;top:1286.87px;font-size:35px;line-height:35px;color:#3f3f46;letter-spacing:0.900px;">$0.00</div>
<div class="b" style="left:166.00px;top:1369.25px;width:229.50px;height:62.00px;background:#dcdaf8;border-radius:12px;box-shadow:0 2px 3px rgba(0,0,0,0.05)"></div>
<div class="t" style="left:190.10px;top:1382.62px;font-size:35px;line-height:35px;color:#1e40af;letter-spacing:1.681px;-webkit-text-stroke:1.1px #1e40af;">demo-user</div>
<div class="b" style="left:632.00px;top:1373.25px;width:140.80px;height:67.00px;background:#f1f5f9;border-radius:12px"></div>
<div class="t" style="left:646.10px;top:1389.92px;font-size:35px;line-height:35px;color:#0f172a;letter-spacing:0.987px;">default</div>
<div class="t" style="left:1108.80px;top:1389.62px;font-size:35px;line-height:35px;color:#3f3f46;letter-spacing:0.900px;">8/28/2025, 9:32:30 AM</div>
<div class="t" style="left:1586.38px;top:1389.62px;font-size:35px;line-height:35px;color:#3f3f46;letter-spacing:0.900px;">9/30/2025, 2:54:48 PM</div>
<div class="t" style="left:2062.07px;top:1389.62px;font-size:35px;line-height:35px;color:#3f3f46;letter-spacing:0.900px;"><span style="margin-left:0px;margin-right:-2.4px">1</span>2</div>
<div class="t" style="left:2444.88px;top:1389.62px;font-size:35px;line-height:35px;color:#3f3f46;letter-spacing:0.900px;"><span style="margin-left:0px;margin-right:-2.4px">1</span>52</div>
<div class="t" style="left:2829.03px;top:1389.62px;font-size:35px;line-height:35px;color:#3f3f46;letter-spacing:0.900px;">$0.00</div>
<div class="b" style="left:166.00px;top:1472.00px;width:204.70px;height:62.00px;background:#dcdaf8;border-radius:12px;box-shadow:0 2px 3px rgba(0,0,0,0.05)"></div>
<div class="t" style="left:189.35px;top:1485.37px;font-size:35px;line-height:35px;color:#1e40af;letter-spacing:1.682px;-webkit-text-stroke:1.1px #1e40af;">user_456</div>
<div class="b" style="left:632.00px;top:1476.00px;width:140.80px;height:67.00px;background:#f1f5f9;border-radius:12px"></div>
<div class="t" style="left:646.10px;top:1492.67px;font-size:35px;line-height:35px;color:#0f172a;letter-spacing:0.987px;">default</div>
<div class="t" style="left:1107.67px;top:1492.37px;font-size:35px;line-height:35px;color:#3f3f46;letter-spacing:0.900px;"><span style="margin-left:0px;margin-right:-2.4px">1</span>0/23/2025, <span style="margin-left:-2.1px;margin-right:-2.4px">1</span><span style="margin-left:-2.1px;margin-right:-2.4px">1</span>:26:<span style="margin-left:-2.1px;margin-right:-2.4px">1</span>7 AM</div>
<div class="t" style="left:1585.38px;top:1492.37px;font-size:35px;line-height:35px;color:#3f3f46;letter-spacing:0.900px;"><span style="margin-left:0px;margin-right:-2.4px">1</span>0/23/2025, <span style="margin-left:-2.1px;margin-right:-2.4px">1</span><span style="margin-left:-2.1px;margin-right:-2.4px">1</span>:26:<span style="margin-left:-2.1px;margin-right:-2.4px">1</span>7 AM</div>
<div class="t" style="left:2063.32px;top:1492.37px;font-size:35px;line-height:35px;color:#3f3f46;letter-spacing:0.900px;">3</div>
<div class="t" style="left:2445.75px;top:1492.37px;font-size:35px;line-height:35px;color:#3f3f46;letter-spacing:0.900px;">25</div>
<div class="t" style="left:2829.03px;top:1492.37px;font-size:35px;line-height:35px;color:#3f3f46;letter-spacing:0.900px;">$0.00</div>
<div class="b" style="left:166.00px;top:1574.75px;width:256.80px;height:62.00px;background:#dcdaf8;border-radius:12px;box-shadow:0 2px 3px rgba(0,0,0,0.05)"></div>
<div class="t" style="left:191.47px;top:1588.12px;font-size:35px;line-height:35px;color:#1e40af;letter-spacing:1.966px;-webkit-text-stroke:1.1px #1e40af;">your-user-id</div>
<div class="b" style="left:632.00px;top:1578.75px;width:140.80px;height:67.00px;background:#f1f5f9;border-radius:12px"></div>
<div class="t" style="left:646.10px;top:1595.42px;font-size:35px;line-height:35px;color:#0f172a;letter-spacing:0.987px;">default</div>
<div class="t" style="left:1108.80px;top:1595.12px;font-size:35px;line-height:35px;color:#3f3f46;letter-spacing:0.900px;">8/<span style="margin-left:-2.1px;margin-right:-2.4px">1</span>9/2025, 4:23:58 PM</div>
<div class="t" style="left:1586.50px;top:1595.12px;font-size:35px;line-height:35px;color:#3f3f46;letter-spacing:0.900px;">8/<span style="margin-left:-2.1px;margin-right:-2.4px">1</span>9/2025, 4:23:58 PM</div>
<div class="t" style="left:2063.95px;top:1595.12px;font-size:35px;line-height:35px;color:#3f3f46;letter-spacing:0.900px;">4</div>
<div class="t" style="left:2445.75px;top:1595.12px;font-size:35px;line-height:35px;color:#3f3f46;letter-spacing:0.900px;">26</div>
<div class="t" style="left:2829.03px;top:1595.12px;font-size:35px;line-height:35px;color:#3f3f46;letter-spacing:0.900px;">$0.00</div>
<div class="t" style="left:1661.12px;top:1705.26px;font-size:41.5px;line-height:41.5px;color:#3f3f46;letter-spacing:-0.056px;-webkit-text-stroke:1.0px #3f3f46;">Rows per page</div>
<div class="b" style="left:1963.80px;top:1678.60px;width:208.40px;height:94.80px;border:3px solid #e2e8f0;border-radius:14px;box-sizing:border-box;background:#fff"></div>
<div class="t" style="left:2002.88px;top:1705.26px;font-size:41.5px;line-height:41.5px;color:#3f3f46;letter-spacing:2.500px;-webkit-text-stroke:0.6px #3f3f46;">50</div>
<svg class="i" style="left:2086.96px;top:1702.46px;width:46.08px;height:46.08px;" viewBox="0 0 24 24" fill="none" stroke="#a1a1aa" stroke-width="2" stroke-linecap="round" stroke-linejoin="round"><path d="m6 9 6 6 6-6"/></svg>
<div class="t" style="left:2268.03px;top:1705.26px;font-size:41.5px;line-height:41.5px;color:#3f3f46;letter-spacing:-0.717px;-webkit-text-stroke:1.0px #3f3f46;">Page</div>
<div class="b" style="left:2375.60px;top:1678.60px;width:166.80px;height:94.80px;border:3px solid #e2e8f0;border-radius:14px;box-sizing:border-box;background:#fff"></div>
<div class="t" style="left:2399.88px;top:1705.26px;font-size:41.5px;line-height:41.5px;color:#3f3f46;letter-spacing:0.000px;-webkit-text-stroke:0.6px #3f3f46;">1</div>
<div class="t" style="left:2554.55px;top:1705.26px;font-size:41.5px;line-height:41.5px;color:#3f3f46;letter-spacing:-0.825px;-webkit-text-stroke:1.0px #3f3f46;">of 1</div>
<div class="b" style="left:2718.20px;top:1678.20px;width:95.20px;height:95.30px;border:3px solid #eff3f7;border-radius:17px;box-sizing:border-box;background:#fff"></div>
<svg class="i" style="left:2741.40px;top:1701.50px;width:48.72px;height:48.72px;" viewBox="0 0 24 24" fill="none" stroke="#a1a1aa" stroke-width="2" stroke-linecap="round" stroke-linejoin="round"><path d="m11 17-5-5 5-5"/><path d="m18 17-5-5 5-5"/></svg>
<div class="b" style="left:2838.50px;top:1678.20px;width:95.20px;height:95.30px;border:3px solid #eff3f7;border-radius:17px;box-sizing:border-box;background:#fff"></div>
<svg class="i" style="left:2861.70px;top:1701.50px;width:48.72px;height:48.72px;" viewBox="0 0 24 24" fill="none" stroke="#a1a1aa" stroke-width="2" stroke-linecap="round" stroke-linejoin="round"><path d="m15 18-6-6 6-6"/></svg>
<div class="b" style="left:2958.50px;top:1678.20px;width:95.20px;height:95.30px;border:3px solid #eff3f7;border-radius:17px;box-sizing:border-box;background:#fff"></div>
<svg class="i" style="left:2981.70px;top:1701.50px;width:48.72px;height:48.72px;" viewBox="0 0 24 24" fill="none" stroke="#a1a1aa" stroke-width="2" stroke-linecap="round" stroke-linejoin="round"><path d="m9 18 6-6-6-6"/></svg>
<div class="b" style="left:3078.70px;top:1678.20px;width:95.20px;height:95.30px;border:3px solid #eff3f7;border-radius:17px;box-sizing:border-box;background:#fff"></div>
<svg class="i" style="left:3101.90px;top:1701.50px;width:48.72px;height:48.72px;" viewBox="0 0 24 24" fill="none" stroke="#a1a1aa" stroke-width="2" stroke-linecap="round" stroke-linejoin="round"><path d="m6 17 5-5-5-5"/><path d="m13 17 5-5-5-5"/></svg>
</body></html>
